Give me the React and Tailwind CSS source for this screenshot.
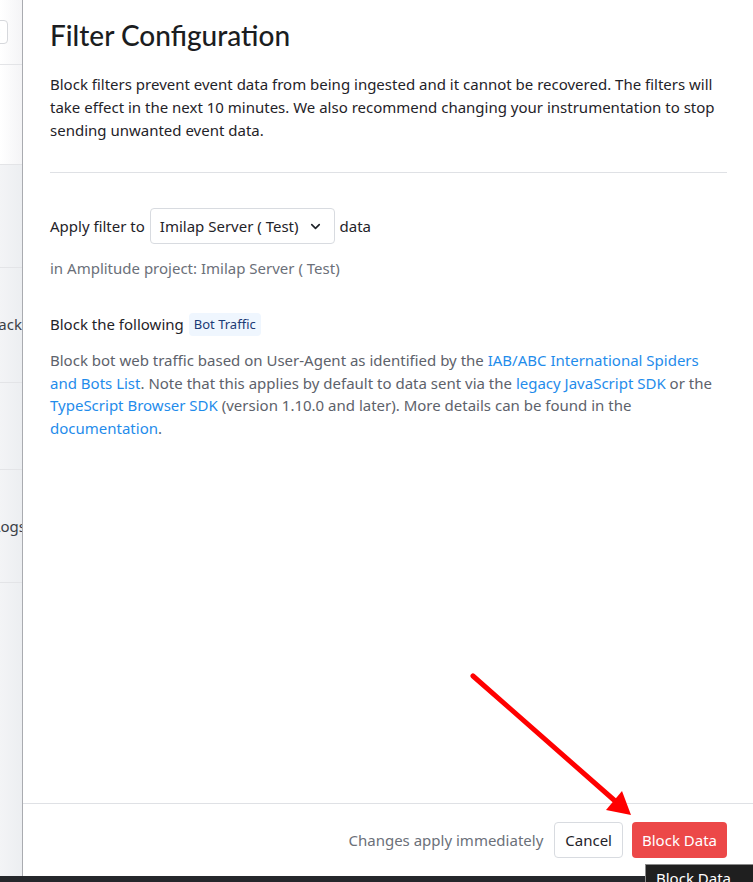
import { ChevronDown } from 'lucide-react'

const body = { fontFamily: '"Noto Sans", "Open Sans", sans-serif' }
const title = { fontFamily: 'Lato, "Noto Sans", sans-serif' }

function SideStrip() {
  return (
    <div className="flex h-full w-[23px] shrink-0 flex-col overflow-hidden border-r border-[#a9abb0] text-[15px] text-[#3b3f47]" style={body}>
      <div className="flex h-[65px] shrink-0 items-center border-b border-[#e3e4e7] bg-gradient-to-r from-white to-[#f4f4f6]">
        <div className="-ml-2 flex h-[24px] w-[16px] items-center justify-end rounded border border-[#d6d8dc] bg-white pr-[3px] text-[10px] leading-none text-[#555]">⋮</div>
      </div>
      <div className="h-[100px] shrink-0 border-b border-[#e3e4e7] bg-gradient-to-r from-white to-[#f4f4f6]" />
      <div className="h-[103px] shrink-0 border-b border-[#e3e4e7] bg-gradient-to-r from-[#f3f4f6] to-[#eceef1]" />
      <div className="flex h-[115px] shrink-0 items-center justify-end border-b border-[#e3e4e7] bg-gradient-to-r from-[#f3f4f6] to-[#eceef1] pb-[1px]">
        <span className="whitespace-nowrap">ack</span>
      </div>
      <div className="h-[87px] shrink-0 border-b border-[#e3e4e7] bg-gradient-to-r from-[#f3f4f6] to-[#eceef1]" />
      <div className="flex h-[113px] shrink-0 items-center justify-end border-b border-[#e3e4e7] bg-gradient-to-r from-[#f3f4f6] to-[#eceef1]">
        <span className="-mr-[4px] whitespace-nowrap">Logs</span>
      </div>
      <div className="flex-1 bg-gradient-to-r from-[#f3f4f6] to-[#eceef1]" />
    </div>
  )
}

function Link({ children }) {
  return <a className="text-[#1f8ceb]">{children}</a>
}

export default function App() {
  return (
    <div className="relative flex h-[882px] w-[753px] flex-col overflow-hidden bg-white">
      <div className="flex min-h-0 flex-1">
        <SideStrip />
        <div className="flex flex-1 flex-col">
          <div className="flex-1 pl-[27px] pr-[26px] pt-[17px]">
            <h1 className="text-[28px] font-medium leading-[36px] text-[#1b1d21]" style={title}>
              Filter Configuration
            </h1>
            <p className="mt-[20px] text-[15px] leading-[23px] text-[#1f2329]" style={body}>
              Block filters prevent event data from being ingested and it cannot be recovered. The filters will take effect in the next 10 minutes. We also recommend changing your instrumentation to stop sending unwanted event data.
            </p>
            <div className="mt-[30px] h-px bg-[#dfe1e5]" />

            <div className="mt-[35px] flex items-center gap-[5px] text-[15px] text-[#1f2329]" style={body}>
              <span>Apply filter to</span>
              <button className="flex h-[36px] items-center gap-[9px] rounded border border-[#d8dbe0] bg-white pl-[9px] pr-[11px] text-[15px] text-[#1f2329]">
                Imilap Server ( Test)
                <ChevronDown size={15} strokeWidth={2.6} />
              </button>
              <span>data</span>
            </div>
            <div className="mt-[13px] text-[15px] leading-[23px] text-[#6b7079]" style={body}>
              in Amplitude project: Imilap Server ( Test)
            </div>

            <div className="mt-[33px] flex items-center gap-[5px] text-[15px] text-[#1f2329]" style={body}>
              <span>Block the following</span>
              <span className="rounded-sm bg-[#eff6fe] px-[5px] py-[2px] text-[13px] leading-[19px] text-[#1b3a75]">Bot Traffic</span>
            </div>
            <p className="mt-[13px] text-[15px] leading-[22.5px] text-[#5d626b]" style={body}>
              Block bot web traffic based on User-Agent as identified by the <Link>IAB/ABC International Spiders and Bots List</Link>. Note that this applies by default to data sent via the <Link>legacy JavaScript SDK</Link> or the <Link>TypeScript Browser SDK</Link> (version 1.10.0 and later). More details can be found in the <Link>documentation</Link>.
            </p>
          </div>

          <div className="flex h-[73px] shrink-0 items-center justify-end gap-[9px] border-t border-[#dfe1e5] pr-[26px] text-[15px]" style={body}>
            <span className="mr-[2px] text-[#6b7079]">Changes apply immediately</span>
            <button className="h-[36px] rounded border border-[#d8dbe0] bg-white px-[10px] text-[#1f2329]">Cancel</button>
            <button className="h-[36px] rounded bg-[#ec4848] px-[10px] text-white">Block Data</button>
          </div>
        </div>
      </div>
      <div className="h-[6px] shrink-0 bg-[#25272b]" />

      <div className="absolute left-[645px] top-[864px] h-[24px] w-[120px] border border-[#8a8a8a] bg-[#1f1f1f] px-[10px] pt-[3px] text-[15px] leading-[20px] text-white" style={body}>
        Block Data
      </div>

      <svg className="pointer-events-none absolute left-0 top-0" width="753" height="882">
        <line x1="473" y1="676" x2="614" y2="800" stroke="#ff0000" strokeWidth="5" strokeLinecap="round" />
        <polygon points="631,815 606,810 622,791" fill="#ff0000" />
      </svg>
    </div>
  )
}
